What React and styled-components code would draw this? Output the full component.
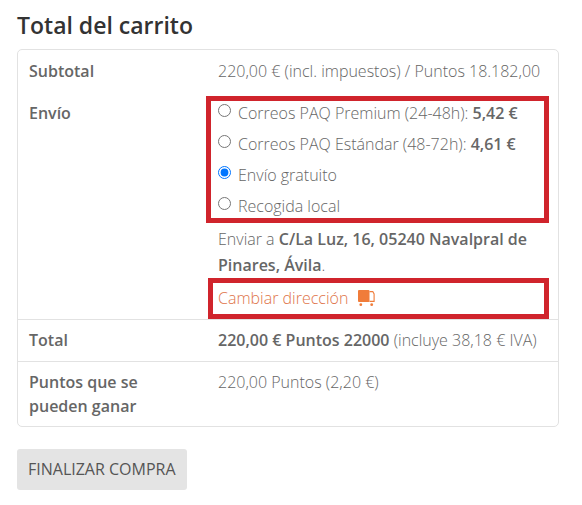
import { useState } from "react";
import styled, { createGlobalStyle } from "styled-components";

const Colors = {
  Text: "#666",
  Heading: "#333",
  Line: "#e2e2e2",
  Accent: "#e0744a",
  Icon: "#f07c3a",
  Mark: "#d0242c",
  Button: "#e4e4e4",
};

const GlobalStyle = createGlobalStyle`
  * {
    box-sizing: border-box;
  }

  body {
    margin: 0;
    background: #fff;
    color: ${Colors.Text};
    font-family: "Open Sans", sans-serif;
    font-size: 16px;
    font-weight: 300;
    line-height: 24px;
  }
`;

const CartTotals = styled.main`
  padding: 9px 23px 16px 17px;
`;

const Title = styled.h2`
  margin: 0 0 8px;
  color: ${Colors.Heading};
  font-size: 23px;
  font-weight: 600;
  line-height: 32px;
`;

const Table = styled.table`
  width: 100%;
  table-layout: fixed;
  border: 1px solid ${Colors.Line};
  border-radius: 5px;
  border-collapse: separate;
  border-spacing: 0;
`;

const Row = styled.tr`
  > * {
    border-top: ${({ $line }) => ($line ? `1px solid ${Colors.Line}` : "0")};
  }
`;

const Label = styled.th`
  width: 35%;
  padding: 9px 40px 8px 11px;
  font-weight: 600;
  text-align: left;
  vertical-align: top;
`;

const Value = styled.td`
  padding: 9px 11px 9px;
  vertical-align: top;
`;

const ShippingValue = styled.td`
  padding: 4px 9px 0 0;
  vertical-align: top;
`;

const TotalLabel = styled(Label)`
  padding-top: 8px;
`;

const TotalValue = styled(Value)`
  padding-top: 8px;
`;

const Strong = styled.strong`
  font-weight: 600;
`;

const MethodList = styled.ul`
  display: flex;
  flex-direction: column;
  gap: 7px;
  margin: 0 0 0 -1px;
  padding: 0 7px;
  border: 5px solid ${Colors.Mark};
  list-style: none;
`;

const Method = styled.li`
  display: flex;
  align-items: flex-start;
  gap: 7px;
`;

const Radio = styled.input`
  flex: none;
  width: 13px;
  height: 13px;
  margin: 3px 0 0;
`;

const Destination = styled.p`
  margin: 0;
  padding: 3px 11px 0;
  line-height: 26px;
`;

const ChangeAddress = styled.div`
  margin-left: 1px;
  padding: 3px 5px 4px;
  border: 5px solid ${Colors.Mark};

  a {
    display: flex;
    align-items: center;
    gap: 10px;
    width: fit-content;
    color: ${Colors.Accent};
    text-decoration: none;
  }
`;

const Checkout = styled.button`
  margin-top: 22px;
  padding: 8px 11px;
  border: 0;
  border-radius: 3px;
  background: ${Colors.Button};
  color: #555;
  font: inherit;
  font-weight: 400;
  line-height: 25px;
  text-transform: uppercase;
  cursor: pointer;
`;

const methods = [
  { id: "premium", name: "Correos PAQ Premium (24-48h):", price: "5,42 €" },
  { id: "estandar", name: "Correos PAQ Estándar (48-72h):", price: "4,61 €" },
  { id: "gratuito", name: "Envío gratuito" },
  { id: "local", name: "Recogida local" },
];

function TruckIcon() {
  return (
    <svg width="17" height="17" viewBox="0 0 17 17" aria-hidden="true">
      <rect x="0" y="0" width="11.5" height="12" rx="1" fill={Colors.Icon} />
      <path
        d="M11.5 1.6h3.3l1.3 2.4v7.4h-4.6"
        fill="none"
        stroke={Colors.Icon}
        strokeWidth="1.1"
      />
      <circle cx="2.8" cy="14.7" r="1.4" fill={Colors.Icon} />
      <circle cx="13.7" cy="14.7" r="1.4" fill={Colors.Icon} />
    </svg>
  );
}

export default function App() {
  const [selected, setSelected] = useState("gratuito");

  return (
    <>
      <GlobalStyle />
      <CartTotals>
        <Title>Total del carrito</Title>
        <Table>
          <tbody>
            <Row>
              <Label scope="row">Subtotal</Label>
              <Value>220,00 € (incl. impuestos) / Puntos 18.182,00</Value>
            </Row>
            <Row>
              <Label scope="row">Envío</Label>
              <ShippingValue>
                <MethodList>
                  {methods.map(({ id, name, price }) => (
                    <Method key={id}>
                      <Radio
                        type="radio"
                        name="shipping"
                        id={id}
                        checked={selected === id}
                        onChange={() => setSelected(id)}
                      />
                      <label htmlFor={id}>
                        {name} {price ? <Strong>{price}</Strong> : null}
                      </label>
                    </Method>
                  ))}
                </MethodList>
                <Destination>
                  Enviar a{" "}
                  <Strong>C/La Luz, 16, 05240 Navalpral de Pinares, Ávila</Strong>.
                </Destination>
                <ChangeAddress>
                  <a href="#direccion">
                    Cambiar dirección
                    <TruckIcon />
                  </a>
                </ChangeAddress>
              </ShippingValue>
            </Row>
            <Row $line>
              <TotalLabel scope="row">Total</TotalLabel>
              <TotalValue>
                <Strong>220,00 € Puntos 22000</Strong> (incluye 38,18 € IVA)
              </TotalValue>
            </Row>
            <Row $line>
              <TotalLabel scope="row">Puntos que se pueden ganar</TotalLabel>
              <TotalValue>220,00 Puntos (2,20 €)</TotalValue>
            </Row>
          </tbody>
        </Table>
        <Checkout type="button">Finalizar compra</Checkout>
      </CartTotals>
    </>
  );
}
